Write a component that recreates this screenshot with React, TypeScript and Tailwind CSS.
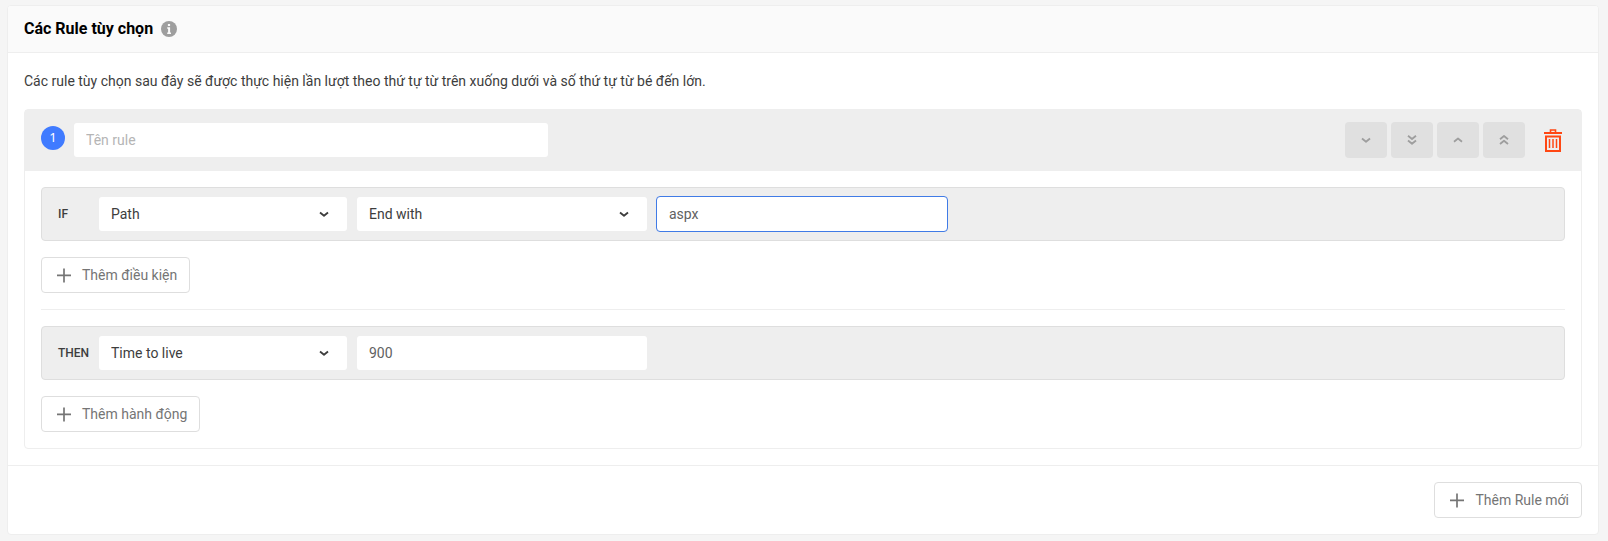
import React from "react"
import { clsx } from "clsx"

function Chevron({ d, className }: { d: string; className?: string }) {
  return (
    <svg
      viewBox="0 0 12 12"
      fill="none"
      stroke="currentColor"
      strokeWidth="1.8"
      strokeLinejoin="round"
      aria-hidden="true"
      className={clsx("h-3 w-3", className)}
    >
      <path d={d} />
    </svg>
  )
}

const DOWN = "M2 4.5 6 7.8 10 4.5"

const moves = [
  { label: "Xuống", d: DOWN },
  { label: "Xuống cuối", d: "M2 1.7 6 5 10 1.7M2 6.5 6 9.8 10 6.5" },
  { label: "Lên", d: "M2 7.8 6 4.5 10 7.8" },
  { label: "Lên đầu", d: "M2 5.3 6 2 10 5.3M2 10 6 6.7 10 10" },
]

function InfoIcon() {
  return (
    <svg viewBox="0 0 16 16" className="h-4 w-4" aria-hidden="true">
      <circle cx="8" cy="8" r="8" fill="#9e9e9e" />
      <path d="M6.9 3h2.2v2H6.9zM6.2 6.2h2.9v5.2h.9v1.5H6.2v-1.5h.9V7.7h-.9z" fill="#fafafa" />
    </svg>
  )
}

function TrashIcon() {
  return (
    <svg viewBox="0 0 20 24" fill="none" stroke="currentColor" className="h-6 w-5" aria-hidden="true">
      <path d="M7.5 4.5V2h5v2.5" strokeWidth="1.6" />
      <path d="M1 5h18" strokeWidth="2" />
      <path d="M3 8.5h14V23H3z" strokeWidth="2" />
      <path d="M6.5 11v9M10 11v9M13.5 11v9" strokeWidth="1.5" />
    </svg>
  )
}

function AddButton({ children }: { children: React.ReactNode }) {
  return (
    <button
      type="button"
      className="inline-flex h-9 items-center gap-2 rounded border border-[#dedede] bg-white px-3 text-sm text-[#757575] hover:bg-gray-50"
    >
      <svg viewBox="0 0 20 20" className="h-5 w-5" fill="none" stroke="currentColor" strokeWidth="1.7" aria-hidden="true">
        <path d="M3 10.4h14M10 3.4v14" />
      </svg>
      {children}
    </button>
  )
}

interface SelectProps extends React.SelectHTMLAttributes<HTMLSelectElement> {
  options: string[]
}

function Select({ options, className, ...props }: SelectProps) {
  return (
    <div className={clsx("relative", className)}>
      <select
        className="block h-9 w-full appearance-none rounded border border-transparent bg-white bg-clip-padding pl-3 pr-8 text-sm text-[#3d3d3d] focus:outline-none"
        {...props}
      >
        {options.map((opt) => (
          <option key={opt}>{opt}</option>
        ))}
      </select>
      <Chevron d={DOWN} className="pointer-events-none absolute right-[18px] top-3 text-[#3d3d3d]" />
    </div>
  )
}

function Input({ className, ...props }: React.InputHTMLAttributes<HTMLInputElement>) {
  return (
    <input
      type="text"
      className={clsx(
        "block h-9 rounded border bg-white bg-clip-padding px-3 text-sm text-[#616161] placeholder:text-[#b5b5b5] focus:outline-none",
        className
      )}
      {...props}
    />
  )
}

function RuleRow({ label, children }: { label: string; children: React.ReactNode }) {
  return (
    <div className="flex items-center gap-2 rounded border border-[#dedede] bg-[#eee] py-2 pl-4 pr-2">
      <span className="w-8 text-xs font-medium text-[#3d3d3d]">{label}</span>
      {children}
    </div>
  )
}

export default function App() {
  return (
    <div className="min-h-screen bg-[#f5f5f5] pb-1.5 pl-[7px] pr-[9px] pt-[5px] font-[Roboto,sans-serif] text-[#3d3d3d]">
      <section className="overflow-hidden rounded border border-[#eee] bg-white">
        <header className="flex h-[47px] items-center gap-2 border-b border-[#eee] bg-[#fafafa] px-4">
          <h2 className="text-base font-bold text-black">Các Rule tùy chọn</h2>
          <InfoIcon />
        </header>

        <div className="p-4">
          <p className="mb-4 text-sm leading-6">
            Các rule tùy chọn sau đây sẽ được thực hiện lần lượt theo thứ tự từ trên xuống dưới và số thứ tự từ bé đến lớn.
          </p>

          <div className="rounded border border-[#eee]">
            <div className="flex items-start justify-between border-b border-[#eee] bg-[#eee] px-4 py-3">
              <div className="flex items-start gap-2">
                <span className="mt-1 flex h-6 w-6 items-center justify-center rounded-full bg-[#407bff] font-['Noto_Sans',sans-serif] text-[13px] text-white">
                  1
                </span>
                <Input aria-label="Tên rule" placeholder="Tên rule" className="w-[476px] border-transparent" />
              </div>
              <div className="flex items-center gap-1 pr-0.5">
                {moves.map((m) => (
                  <button
                    key={m.label}
                    type="button"
                    disabled
                    aria-label={m.label}
                    className="flex h-9 w-[42px] items-center justify-center rounded bg-[#e0e0e0] text-[#9e9e9e]"
                  >
                    <Chevron d={m.d} />
                  </button>
                ))}
                <button type="button" aria-label="Xóa rule" className="ml-3.5 flex h-9 items-center text-[#ff4713]">
                  <TrashIcon />
                </button>
              </div>
            </div>

            <div className="p-4">
              <RuleRow label="IF">
                <Select aria-label="Điều kiện" options={["Path"]} className="w-[250px]" />
                <Select aria-label="So sánh" options={["End with"]} className="w-[292px]" />
                <Input aria-label="Giá trị" defaultValue="aspx" className="w-[292px] border-[#407be6]" />
              </RuleRow>
              <div className="mt-4 flex">
                <AddButton>Thêm điều kiện</AddButton>
              </div>

              <hr className="my-4 border-[#eee]" />

              <RuleRow label="THEN">
                <Select aria-label="Hành động" options={["Time to live"]} className="w-[250px]" />
                <Input aria-label="Thời gian" defaultValue="900" className="w-[292px] border-transparent" />
              </RuleRow>
              <div className="mt-4 flex">
                <AddButton>Thêm hành động</AddButton>
              </div>
            </div>
          </div>
        </div>

        <footer className="flex justify-end border-t border-[#eee] p-4">
          <AddButton>Thêm Rule mới</AddButton>
        </footer>
      </section>
    </div>
  )
}
